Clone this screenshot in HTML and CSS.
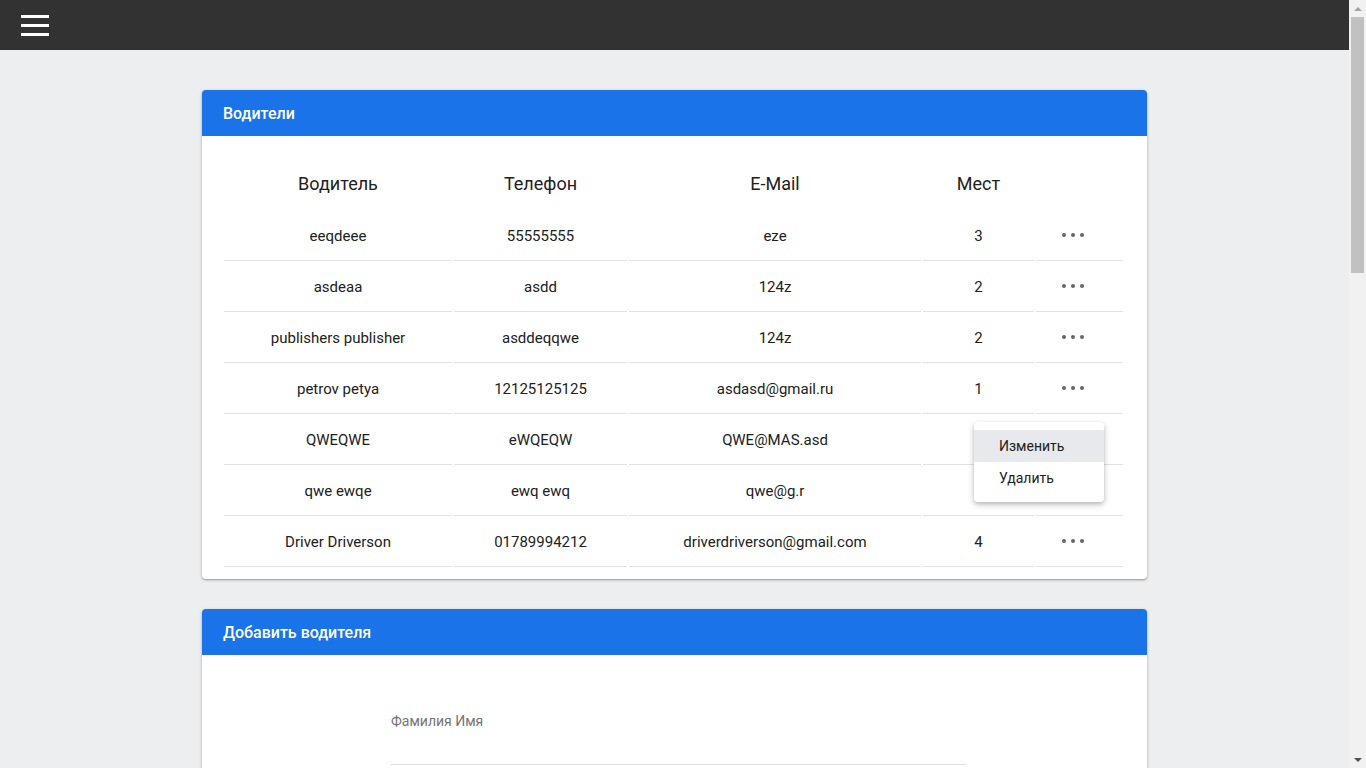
FILE: index.html
```html
<!DOCTYPE html>
<html lang="ru">
<head>
<meta charset="utf-8">
<title>Водители</title>
<link rel="stylesheet" href="styles.css">
</head>
<body>
<header class="topbar">
  <button class="menu-btn" aria-label="Меню">
    <span></span><span></span><span></span>
  </button>
</header>
<main class="page">
  <section class="card drivers">
    <div class="card-header">Водители</div>
    <div class="card-body">
      <table class="table">
        <colgroup>
          <col class="c1"><col class="c2"><col class="c3"><col class="c4"><col class="c5">
        </colgroup>
        <thead>
          <tr><th>Водитель</th><th>Телефон</th><th>E-Mail</th><th>Мест</th><th></th></tr>
        </thead>
        <tbody>
          <tr><td>eeqdeee</td><td>55555555</td><td>eze</td><td>3</td><td class="act"><span class="dots"><i></i><i></i><i></i></span></td></tr>
          <tr><td>asdeaa</td><td>asdd</td><td>124z</td><td>2</td><td class="act"><span class="dots"><i></i><i></i><i></i></span></td></tr>
          <tr><td>publishers publisher</td><td>asddeqqwe</td><td>124z</td><td>2</td><td class="act"><span class="dots"><i></i><i></i><i></i></span></td></tr>
          <tr><td>petrov petya</td><td>12125125125</td><td>asdasd@gmail.ru</td><td>1</td><td class="act"><span class="dots"><i></i><i></i><i></i></span></td></tr>
          <tr><td>QWEQWE</td><td>eWQEQW</td><td>QWE@MAS.asd</td><td>2</td><td class="act"><span class="dots"><i></i><i></i><i></i></span></td></tr>
          <tr><td>qwe ewqe</td><td>ewq ewq</td><td>qwe@g.r</td><td>2</td><td class="act"><span class="dots"><i></i><i></i><i></i></span></td></tr>
          <tr><td>Driver Driverson</td><td>01789994212</td><td>driverdriverson@gmail.com</td><td>4</td><td class="act"><span class="dots"><i></i><i></i><i></i></span></td></tr>
        </tbody>
      </table>
    </div>
    <div class="popup-menu">
      <div class="menu-item active">Изменить</div>
      <div class="menu-item">Удалить</div>
    </div>
  </section>

  <section class="card add">
    <div class="card-header">Добавить водителя</div>
    <div class="card-body form-body">
      <div class="field"><label>Фамилия Имя</label><div class="input"></div></div>
    </div>
  </section>
</main>
<div class="scrollbar" aria-hidden="true">
  <div class="sb-btn"><span class="arrow-up"></span></div>
  <div class="sb-track"><div class="sb-thumb"></div></div>
  <div class="sb-btn"><span class="arrow-down"></span></div>
</div>
</body>
</html>
```

FILE: styles.css
```css
* { box-sizing: border-box; }
html, body { margin: 0; padding: 0; }
body {
  background: #edeef0;
  font-family: Roboto, "Noto Sans", Arial, sans-serif;
  color: #212121;
  padding-right: 17px;
}
.scrollbar {
  position: fixed;
  top: 0;
  right: 0;
  width: 17px;
  height: 100vh;
  background: #f1f1f1;
  display: flex;
  flex-direction: column;
}
.sb-btn {
  height: 17px;
  display: flex;
  align-items: center;
  justify-content: center;
}
.arrow-up {
  width: 0; height: 0;
  border-left: 4px solid transparent;
  border-right: 4px solid transparent;
  border-bottom: 4px solid #a3a3a3;
}
.arrow-down {
  width: 0; height: 0;
  border-left: 4px solid transparent;
  border-right: 4px solid transparent;
  border-top: 4px solid #505050;
}
.sb-track {
  flex: 1;
  padding: 0 2px;
}
.sb-thumb {
  height: 256px;
  background: #c1c1c1;
}
.topbar {
  height: 50px;
  background: #323232;
  display: flex;
  align-items: center;
  padding-left: 21px;
}
.menu-btn {
  background: none;
  border: 0;
  padding: 0;
  width: 28px;
  height: 21px;
  display: flex;
  flex-direction: column;
  justify-content: space-between;
  cursor: pointer;
  margin-top: 1px;
}
.menu-btn span {
  display: block;
  height: 3px;
  background: #fff;
}
.page {
  padding: 40px 0 40px;
}
.card {
  width: 945px;
  margin: 0 auto 30px;
  background: #fff;
  border-radius: 4px;
  box-shadow: 0 1px 3px rgba(0,0,0,0.3), 0 1px 1px rgba(0,0,0,0.12);
  position: relative;
}
.card-header {
  height: 46px;
  background: #1a73e8;
  color: #fff;
  font-size: 16px;
  font-weight: 500;
  padding: 0 21px;
  display: flex;
  align-items: center;
  border-radius: 4px 4px 0 0;
}
.card-body {
  padding: 18px 22px 10px 20px;
}
.table {
  width: 100%;
  border-collapse: separate;
  border-spacing: 2px;
  font-size: 15px;
  text-align: center;
}
.c1 { width: 228px; }
.c2 { width: 173px; }
.c3 { width: 292px; }
.c4 { width: 111px; }
.c5 { width: 87px; }
.table th {
  font-size: 18px;
  font-weight: 400;
  height: 54px;
  padding: 0;
  color: #212121;
}
.table td {
  height: 49px;
  padding: 0;
  border-bottom: 1px solid #e2e2e2;
  color: #212121;
}
.table td.act { text-align: left; padding-left: 26px; }
.dots {
  display: inline-flex;
  gap: 5px;
  vertical-align: middle;
  position: relative;
  top: -2px;
}
.dots i {
  display: block;
  width: 4px;
  height: 4px;
  border-radius: 50%;
  background: #62666b;
}
.popup-menu {
  position: absolute;
  left: 772px;
  top: 332px;
  width: 130px;
  padding: 8px 0;
  background: #fff;
  border-radius: 4px;
  box-shadow: 0 2px 4px rgba(0,0,0,0.2), 0 3px 8px rgba(0,0,0,0.12);
  font-size: 14px;
  color: #212121;
}
.menu-item {
  height: 32px;
  line-height: 32px;
  padding-left: 25px;
}
.menu-item.active { background: #e8e9ec; }
.form-body {
  padding: 58px 0 400px 189px;
}
.field {
  width: 575px;
}
.field label {
  display: block;
  font-size: 14px;
  color: #777373;
  line-height: 17px;
}
.input {
  height: 35px;
  border-bottom: 1px solid #dedede;
}
```
